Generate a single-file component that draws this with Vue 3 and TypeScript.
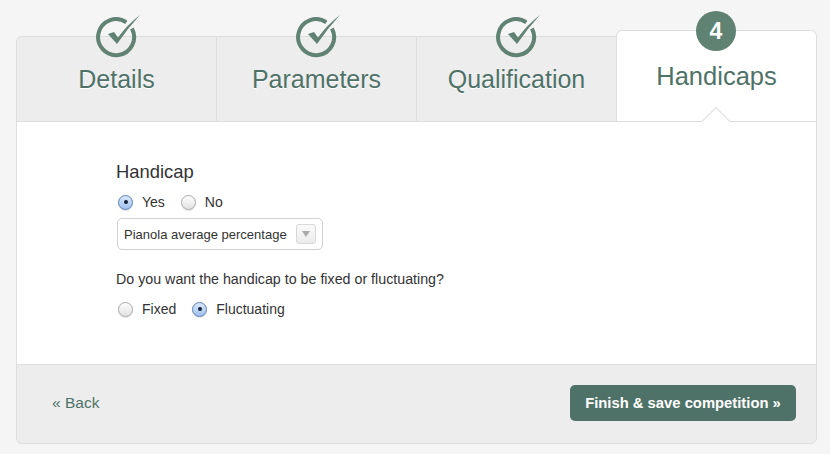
<template>
  <div class="page">
    <div class="wizard">
      <div class="tabs">
        <div
          v-for="(tab, i) in tabs"
          :key="tab"
          class="tab"
          :class="{ active: i === current }"
        >
          <span v-if="i === current" class="step-number">{{ i + 1 }}</span>
          <svg v-else class="step-check" width="46" height="46" viewBox="0 0 46 46">
            <path d="M35.9 15.5 A18 18 0 1 1 30.3 9.3" fill="none" stroke="#5f8273" stroke-width="4" />
            <path d="M12 21 L18 19 L22 24.5 Q31 12 44 2 Q31 16 21 31 Z" fill="#5f8273" />
          </svg>
          <span class="tab-title">{{ tab }}</span>
        </div>
      </div>

      <div class="content">
        <h3 class="heading">Handicap</h3>
        <div class="radio-row">
          <label class="radio"><span class="dot on"></span>Yes</label>
          <label class="radio"><span class="dot"></span>No</label>
        </div>
        <div class="select">
          <span>Pianola average percentage</span>
          <span class="select-btn"><i class="arrow"></i></span>
        </div>
        <p class="question">Do you want the handicap to be fixed or fluctuating?</p>
        <div class="radio-row">
          <label class="radio"><span class="dot"></span>Fixed</label>
          <label class="radio"><span class="dot on"></span>Fluctuating</label>
        </div>
      </div>

      <div class="footer">
        <a class="back">« Back</a>
        <button class="finish" type="button">Finish &amp; save competition »</button>
      </div>
    </div>
  </div>
</template>

<script setup lang="ts">
const tabs: string[] = ['Details', 'Parameters', 'Qualification', 'Handicaps'];
const current = 3;
</script>

<style>
html,
body {
  margin: 0;
  background: #f5f5f5;
}
</style>

<style scoped>
.page {
  width: 830px;
  height: 454px;
  padding: 36px 13px 0 16px;
  box-sizing: border-box;
  overflow: hidden;
  background: #f5f5f5;
  font-family: 'Liberation Sans', Arial, sans-serif;
  color: #333;
}

.wizard {
  width: 801px;
  height: 408px;
  box-sizing: border-box;
  display: flex;
  flex-direction: column;
  border: 1px solid #dedede;
  border-radius: 6px;
  background: #ededed;
}

.tabs {
  display: flex;
  height: 84px;
}

.tab {
  position: relative;
  width: 200px;
  box-sizing: border-box;
  padding-top: 27px;
  text-align: center;
  border-right: 1px solid #dedede;
}

.tab.active {
  width: 201px;
  height: 91px;
  margin: -7px -1px 0 -1px;
  padding-top: 30px;
  background: #fff;
  border: 1px solid #dedede;
  border-bottom: none;
  border-radius: 6px 6px 0 0;
  z-index: 1;
}

.tab.active .tab-title {
  position: relative;
  z-index: 3;
  font-size: 25.5px;
}

/* стрелка под активной вкладкой */
.tab.active::after {
  content: '';
  position: absolute;
  left: 89px;
  bottom: -10px;
  width: 19px;
  height: 19px;
  background: #fff;
  border-top: 1px solid #dedede;
  border-left: 1px solid #dedede;
  transform: rotate(45deg);
  z-index: 2;
}

.tab-title {
  font-size: 25px;
  line-height: 30px;
  color: #4f7268;
  text-shadow: 0 1px 0 #fff;
}

.step-check {
  position: absolute;
  left: 79px;
  top: -24px;
}

.step-number {
  position: absolute;
  left: 79px;
  top: -20px;
  width: 40px;
  height: 40px;
  border-radius: 50%;
  background: #5f8273;
  color: #fff;
  font-size: 23px;
  font-weight: bold;
  line-height: 40px;
  text-align: center;
}

.content {
  height: 244px;
  box-sizing: border-box;
  padding: 40px 0 0 99px;
  background: #fff;
  border-top: 1px solid #dedede;
  border-bottom: 1px solid #dedede;
}

.heading {
  margin: 0;
  font-size: 18.4px;
  font-weight: normal;
  line-height: 20px;
  color: #333;
}

.radio-row {
  display: flex;
  gap: 16px;
  height: 20px;
  margin: 10px 0 0 2px;
  align-items: center;
}

.radio {
  display: flex;
  align-items: center;
  gap: 9px;
  font-size: 14px;
  line-height: 20px;
}

.dot {
  position: relative;
  width: 15px;
  height: 15px;
  box-sizing: border-box;
  border-radius: 50%;
  border: 1px solid #a9a9a9;
  background: linear-gradient(#fdfdfd, #e2e2e2);
  box-shadow: 0 1px 1px rgba(0, 0, 0, 0.12);
}

.dot.on {
  border-color: #5d7fb3;
  background: linear-gradient(#dbe8fa, #9fc1ee);
}

.dot.on::after {
  content: '';
  position: absolute;
  left: 4.5px;
  top: 4.5px;
  width: 4px;
  height: 4px;
  border-radius: 50%;
  background: #14213a;
}

.select {
  display: flex;
  align-items: center;
  justify-content: space-between;
  width: 206px;
  height: 32px;
  box-sizing: border-box;
  margin: 6px 0 0 1px;
  padding: 0 6px 0 6px;
  border: 1px solid #d2d2d2;
  border-radius: 5px;
  font-size: 13px;
  color: #333;
}

.select-btn {
  display: flex;
  align-items: center;
  justify-content: center;
  width: 20px;
  height: 20px;
  box-sizing: border-box;
  border: 1px solid #d8d8d8;
  border-radius: 3px;
  background: linear-gradient(#fafafa, #ececec);
}

.arrow {
  width: 0;
  height: 0;
  border-left: 4px solid transparent;
  border-right: 4px solid transparent;
  border-top: 6px solid #aaa;
}

.question {
  margin: 19px 0 0;
  font-size: 14.25px;
  line-height: 20px;
}

.footer {
  flex: 1;
  display: flex;
  align-items: center;
  justify-content: space-between;
  padding: 0 20px 2px 35px;
}

.back {
  font-size: 15.5px;
  color: #4f7268;
}

.finish {
  width: 226px;
  height: 36px;
  padding: 0;
  border: none;
  border-radius: 5px;
  background: #4f7268;
  color: #fff;
  font-family: inherit;
  font-size: 14.8px;
  font-weight: bold;
}
</style>
